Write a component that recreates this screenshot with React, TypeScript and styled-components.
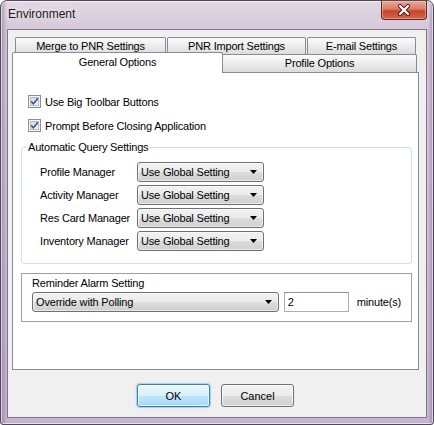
import React from "react";
import styled, { createGlobalStyle } from "styled-components";

const Global = createGlobalStyle`
  html, body { margin: 0; padding: 0; background: #ffffff; }
  body { font-family: "Liberation Sans", Arial, sans-serif; font-size: 11px; letter-spacing: -0.18px; color: #000; }
  * { box-sizing: border-box; }
`;

const Window = styled.div`
  width: 434px;
  height: 425px;
  display: flex;
  flex-direction: column;
  border: 1px solid #4e4a57;
  border-radius: 7px 7px 3px 3px;
  padding: 0 6px 6px 6px;
  background:
    linear-gradient(90deg, rgba(110, 84, 136, 0.45) 0px, rgba(255, 255, 255, 0) 6px, rgba(255, 255, 255, 0) 427px, rgba(110, 84, 136, 0.45) 432px),
    linear-gradient(180deg, #e3d8e4 0px, #d6c8d9 28px, #c8b4cf 100%);
  box-shadow: inset 0 0 0 1px rgba(255, 255, 255, 0.6);
`;

const TitleBar = styled.div`
  height: 28px;
  display: flex;
  align-items: flex-start;
`;

const Title = styled.div`
  padding: 6px 0 0 1px;
  font-size: 12px;
  letter-spacing: 0;
  line-height: 15px;
  color: #1a1a1a;
  text-shadow: 0 0 6px rgba(255, 255, 255, 0.9);
`;

const CloseButton = styled.div`
  margin-left: auto;
  width: 46px;
  height: 19px;
  border: 1px solid #5e2a24;
  border-top: none;
  border-radius: 0 0 4px 4px;
  background: linear-gradient(180deg, #e9a99c 0%, #dd7b68 45%, #c8432b 55%, #d0654b 100%);
  box-shadow: inset 0 0 0 1px rgba(255, 210, 200, 0.45);
  display: flex;
  align-items: center;
  justify-content: center;
`;

const Client = styled.div`
  flex: 1;
  display: flex;
  flex-direction: column;
  border: 1px solid #7c7786;
  background: #f0f0f0;
  padding: 7px 7px 10px 4px;
`;

const TabArea = styled.div`
  height: 35px;
  display: flex;
  flex-direction: column;
`;

const UpperRow = styled.div`
  height: 17px;
  display: flex;
  gap: 1px;
  padding-left: 3px;
`;

const LowerRow = styled.div`
  height: 18px;
  display: flex;
  align-items: flex-end;
`;

const Tab = styled.div<{ $w: number; $active?: boolean; $overlap?: boolean }>`
  width: ${(p) => p.$w}px;
  height: ${(p) => (p.$active ? "21px" : "100%")};
  margin-bottom: ${(p) => (p.$active ? "-1px" : "0")};
  margin-left: ${(p) => (p.$overlap ? "-1px" : "0")};
  position: ${(p) => (p.$active ? "relative" : "static")};
  z-index: ${(p) => (p.$active ? 2 : "auto")};
  border: 1px solid #898c95;
  border-bottom: none;
  border-radius: 2px 2px 0 0;
  background: ${(p) => (p.$active ? "#ffffff" : "linear-gradient(180deg, #fbfbfb 0%, #ececec 50%, #dcdcdc 100%)")};
  text-align: center;
  line-height: ${(p) => (p.$active ? "17px" : "15px")};
  padding-top: 1px;
  white-space: nowrap;
`;

const Panel = styled.div`
  flex: 1;
  display: flex;
  flex-direction: column;
  border: 1px solid #898c95;
  background: #ffffff;
  padding: 20px 6px 0 8px;
`;

const CheckRow = styled.div<{ $first?: boolean }>`
  height: 17px;
  display: flex;
  align-items: center;
  gap: 4px;
  margin-left: 7px;
  margin-top: ${(p) => (p.$first ? "0" : "7px")};
`;

const Group = styled.fieldset`
  margin: 7px 0 0 0;
  padding: 8px 0 12px 18px;
  border: 1px solid #d5dfe5;
  border-radius: 3px;
  display: flex;
  flex-direction: column;
  gap: 3px;
  min-width: 0;
`;

const Legend = styled.legend`
  margin-left: -13px;
  padding: 0 1px;
  line-height: 13px;
`;

const FieldRow = styled.div`
  height: 20px;
  display: flex;
  align-items: center;
`;

const FieldLabel = styled.span`
  width: 97px;
  white-space: nowrap;
`;

const Combo = styled.div<{ $w: number }>`
  width: ${(p) => p.$w}px;
  height: 20px;
  display: flex;
  align-items: center;
  border: 1px solid #707070;
  border-radius: 3px;
  padding-left: 3px;
  background: linear-gradient(180deg, #f2f2f2 0%, #ebebeb 50%, #dddddd 50%, #cfcfcf 100%);
  box-shadow: inset 0 0 0 1px rgba(255, 255, 255, 0.55);
`;

const ComboText = styled.span`
  flex: 1;
  white-space: nowrap;
`;

const Arrow = styled.svg`
  margin-right: 6px;
`;

const ReminderBox = styled.div`
  margin-top: 9px;
  border: 1px solid #a0a0a0;
  padding: 3px 10px 9px 10px;
  display: flex;
  flex-direction: column;
  gap: 2px;
`;

const BoxLabel = styled.div`
  line-height: 13px;
`;

const ReminderRow = styled.div`
  display: flex;
  align-items: center;
`;

const NumberInput = styled.input`
  width: 65px;
  height: 20px;
  margin-left: 5px;
  border: 1px solid #abadb3;
  border-top-color: #8c8f96;
  background: #ffffff;
  padding: 0 0 0 3px;
  font: inherit;
  color: #000;
  outline: none;
`;

const Unit = styled.span`
  margin-left: 8px;
`;

const ButtonRow = styled.div`
  margin-top: 14px;
  display: flex;
  justify-content: center;
  gap: 11px;
`;

const Button = styled.button<{ $default?: boolean }>`
  width: 73px;
  height: 23px;
  padding: 0;
  font: inherit;
  color: #000;
  border-radius: 3px;
  border: 1px solid ${(p) => (p.$default ? "#3c7fb1" : "#707070")};
  background: ${(p) =>
    p.$default
      ? "linear-gradient(180deg, #eaf6fd 0%, #d9f0fc 50%, #bee6fd 50%, #a7d9f5 100%)"
      : "linear-gradient(180deg, #f2f2f2 0%, #ebebeb 50%, #dddddd 50%, #cfcfcf 100%)"};
  box-shadow: ${(p) =>
    p.$default
      ? "inset 0 0 0 1px rgba(255,255,255,0.7), 0 0 1px 1px rgba(80, 190, 240, 0.55)"
      : "inset 0 0 0 1px rgba(255,255,255,0.7)"};
`;

const CheckBox: React.FC = () => (
  <svg width="13" height="13" viewBox="0 0 13 13">
    <defs>
      <linearGradient id="cbg" x1="0" y1="0" x2="1" y2="1">
        <stop offset="0" stopColor="#d8dade" />
        <stop offset="1" stopColor="#fbfbfb" />
      </linearGradient>
    </defs>
    <rect x="0.5" y="0.5" width="12" height="12" fill="#f6f6f6" stroke="#8e8f8f" />
    <rect x="2.5" y="2.5" width="8" height="8" fill="url(#cbg)" stroke="#b8bcc2" />
    <path d="M3.2 6.4 L5.4 8.8 L9.8 3.4" fill="none" stroke="#3d5a95" strokeWidth="1.7" />
  </svg>
);

const DownArrow: React.FC = () => (
  <Arrow width="7" height="4" viewBox="0 0 7 4">
    <path d="M0 0 H7 L3.5 4 Z" fill="#000" />
  </Arrow>
);

const rows = ["Profile Manager", "Activity Manager", "Res Card Manager", "Inventory Manager"];

export default function App() {
  return (
    <>
      <Global />
      <Window>
        <TitleBar>
          <Title>Environment</Title>
          <CloseButton>
            <svg width="14" height="12" viewBox="0 0 14 12">
              <path d="M3 2 L11 10 M11 2 L3 10" stroke="#4a1a14" strokeWidth="4" strokeLinecap="round" />
              <path d="M3 2 L11 10 M11 2 L3 10" stroke="#ffffff" strokeWidth="2.2" strokeLinecap="round" />
            </svg>
          </CloseButton>
        </TitleBar>
        <Client>
          <TabArea>
            <UpperRow>
              <Tab $w={151}>Merge to PNR Settings</Tab>
              <Tab $w={139}>PNR Import Settings</Tab>
              <Tab $w={109}>E-mail Settings</Tab>
            </UpperRow>
            <LowerRow>
              <Tab $w={211} $active>General Options</Tab>
              <Tab $w={195} $overlap>Profile Options</Tab>
            </LowerRow>
          </TabArea>
          <Panel>
            <CheckRow $first>
              <CheckBox />
              <span>Use Big Toolbar Buttons</span>
            </CheckRow>
            <CheckRow>
              <CheckBox />
              <span>Prompt Before Closing Application</span>
            </CheckRow>
            <Group>
              <Legend>Automatic Query Settings</Legend>
              {rows.map((r) => (
                <FieldRow key={r}>
                  <FieldLabel>{r}</FieldLabel>
                  <Combo $w={127}>
                    <ComboText>Use Global Setting</ComboText>
                    <DownArrow />
                  </Combo>
                </FieldRow>
              ))}
            </Group>
            <ReminderBox>
              <BoxLabel>Reminder Alarm Setting</BoxLabel>
              <ReminderRow>
                <Combo $w={247}>
                  <ComboText>Override with Polling</ComboText>
                  <DownArrow />
                </Combo>
                <NumberInput readOnly value="2" />
                <Unit>minute(s)</Unit>
              </ReminderRow>
            </ReminderBox>
          </Panel>
          <ButtonRow>
            <Button $default>OK</Button>
            <Button>Cancel</Button>
          </ButtonRow>
        </Client>
      </Window>
    </>
  );
}
